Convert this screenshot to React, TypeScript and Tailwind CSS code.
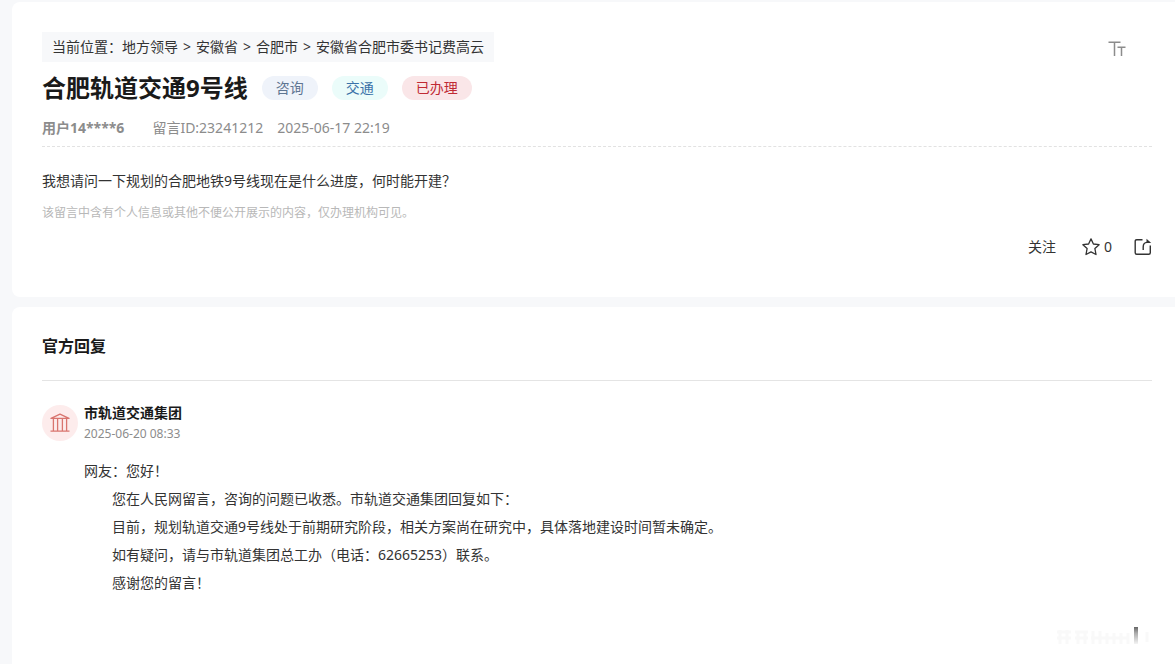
import React from 'react';

const crumbs = ['地方领导', '安徽省', '合肥市', '安徽省合肥市委书记费高云'];

const tags = [
  { label: '咨询', className: 'bg-[#eff3fa] text-[#5f7592]' },
  { label: '交通', className: 'bg-[#ebfcfa] text-[#3a72a8]' },
  { label: '已办理', className: 'bg-[#fae6e8] text-[#c02a34]' },
];

const replyLines = [
  '您在人民网留言，咨询的问题已收悉。市轨道交通集团回复如下：',
  '目前，规划轨道交通9号线处于前期研究阶段，相关方案尚在研究中，具体落地建设时间暂未确定。',
  '如有疑问，请与市轨道集团总工办（电话：62665253）联系。',
  '感谢您的留言！',
];

const FontSizeIcon: React.FC = () => (
  <svg width="18" height="16" viewBox="0 0 18 16" fill="none" stroke="#8c8c8c" strokeWidth="1.5">
    <path d="M0.5 1.2H12.5M6.5 1.2V15M9.5 6.2H17.5M13.5 6.2V15" />
  </svg>
);

const StarIcon: React.FC = () => (
  <svg width="18" height="18" viewBox="0 0 18 18" fill="none" stroke="#333" strokeWidth="1.3" strokeLinejoin="round">
    <path d="M9 0.9L11.4 6L17.1 6.7L12.9 10.6L14 16.5L9 13.9L4 16.5L5.1 10.6L0.9 6.7L6.6 6Z" />
  </svg>
);

const ShareIcon: React.FC = () => (
  <svg width="18" height="18" viewBox="0 0 18 18" fill="none" stroke="#333" strokeWidth="1.4">
    <path d="M8.5 1.7H2.7Q1.2 1.7 1.2 3.2V14.8Q1.2 16.3 2.7 16.3H14.8Q16.3 16.3 16.3 14.8V7.5" />
    <path d="M9.2 12V8.9Q9.2 4.6 13 4.4H15.5" />
    <path d="M12.5 0.8L17.2 4.9H12.5Z" fill="#333" stroke="none" />
  </svg>
);

const OfficeIcon: React.FC = () => (
  <svg width="20" height="20" viewBox="0 0 20 20" fill="none" stroke="#d9756f" strokeWidth="1.3" strokeLinejoin="round">
    <path d="M10 1.2L19 5.4H1Z" />
    <path d="M3.4 5.6V17.6M7.6 5.6V17.6M12.4 5.6V17.6M16.6 5.6V17.6M0.5 18.2H19.5" />
  </svg>
);

const Message: React.FC = () => (
  <section className="rounded-l-lg bg-white pt-[30px] pr-[23px] pb-9 pl-[30px]">
    <div className="flex items-start justify-between">
      <nav className="h-[30px] bg-[#f7f8fa] px-2.5 leading-[30px]">
        当前位置：
        {crumbs.map((crumb, i) => (
          <React.Fragment key={crumb}>
            {i > 0 && <span className="mx-[5px]">&gt;</span>}
            <a href="#">{crumb}</a>
          </React.Fragment>
        ))}
      </nav>
      <button type="button" title="字号" className="mt-[9px] mr-[26px]">
        <FontSizeIcon />
      </button>
    </div>

    {/* Title */}
    <div className="mt-2 flex items-center gap-3.5">
      <h1 className="text-2xl leading-9 font-bold text-[#1a1a1a]">合肥轨道交通9号线</h1>
      {tags.map((tag) => (
        <span key={tag.label} className={`h-6 rounded-full px-3.5 leading-6 ${tag.className}`}>
          {tag.label}
        </span>
      ))}
    </div>

    <div className="mt-3 flex border-b border-dashed border-[#e2e2e2] pb-2 leading-5 text-[#8c8c8c]">
      <span className="mr-7 font-bold">用户14****6</span>
      <span className="mr-3.5">留言ID:23241212</span>
      <time>2025-06-17 22:19</time>
    </div>

    <p className="mt-5 leading-7">我想请问一下规划的合肥地铁9号线现在是什么进度，何时能开建？</p>
    <p className="mt-2 text-xs leading-5 text-[#b8b8b8]">
      该留言中含有个人信息或其他不便公开展示的内容，仅办理机构可见。
    </p>

    {/* Actions */}
    <div className="mt-2.5 flex items-center justify-end leading-7">
      <button type="button">关注</button>
      <button type="button" className="ml-[26px] flex items-center gap-1">
        <StarIcon />
        <span>0</span>
      </button>
      <button type="button" title="分享" className="ml-[22px]">
        <ShareIcon />
      </button>
    </div>
  </section>
);

const Reply: React.FC = () => (
  <section className="relative flex-1 rounded-tl-lg bg-white pt-[27px] pr-[23px] pl-[30px]">
    <h2 className="border-b border-[#e4e4e4] pb-[22px] text-base leading-6 font-bold text-[#1a1a1a]">官方回复</h2>

    <div className="mt-6 flex gap-1.5">
      <div className="flex size-9 shrink-0 items-center justify-center rounded-full bg-[#fdecec]">
        <OfficeIcon />
      </div>
      <div>
        <h3 className="leading-4 font-bold text-[#1a1a1a]">市轨道交通集团</h3>
        <time className="mt-1 block text-xs leading-[18px] text-[#8c8c8c]">2025-06-20 08:33</time>
        <div className="mt-3.5 leading-7">
          <p>网友：您好！</p>
          {replyLines.map((line) => (
            <p key={line} className="indent-[28px]">
              {line}
            </p>
          ))}
        </div>
      </div>
    </div>

    {/* Faded corner mark */}
    <svg className="absolute right-5 bottom-3.5" width="100" height="26" viewBox="0 0 100 26" aria-hidden="true">
      <defs>
        <linearGradient id="mark" x1="0" y1="0" x2="0" y2="1">
          <stop offset="0" stopColor="#666" />
          <stop offset="0.35" stopColor="#aaa" />
          <stop offset="1" stopColor="#f4f4f4" />
        </linearGradient>
      </defs>
      <g stroke="#f9f9f9" strokeWidth="3">
        <path d="M2 8H16M2 14H16M5 6V20M12 6V20M20 8H33M20 14H33M23 8V20M30 8V20M36 14H74M38 7V20M45 7V20M52 9V20M59 9V20M66 9V20M73 9V20M92 8V18" />
      </g>
      <rect x="79" y="3" width="4" height="17" fill="url(#mark)" />
    </svg>
  </section>
);

export default function App() {
  return (
    <div
      lang="zh-CN"
      className="flex min-h-screen flex-col gap-2.5 bg-[#f7f8fa] pt-0.5 pl-3 font-['Noto_Sans','Noto_Sans_CJK_SC',sans-serif] text-sm text-[#333]"
    >
      <Message />
      <Reply />
    </div>
  );
}
